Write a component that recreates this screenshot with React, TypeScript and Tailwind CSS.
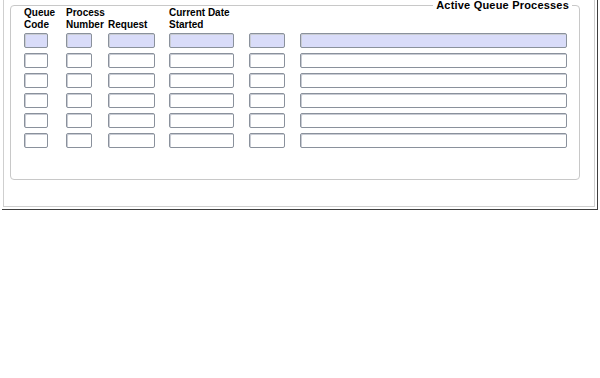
import React from "react";

const widths = [24, 26, 47, 65, 36, 267];
const wClasses = ["w-[24px]", "w-[26px]", "w-[47px]", "w-[65px]", "w-[36px]", "w-[267px]"];

function Field({ idx, active }: { idx: number; active: boolean }) {
  return (
    <div
      className={`${wClasses[idx]} h-[15px] rounded-[2px] border border-[#8a919c] ${
        active ? "bg-[#d9dcf9]" : "bg-white"
      } shadow-[inset_1px_1px_0_#c9ccd4]`}
    />
  );
}

export default function App() {
  const rows = [0, 1, 2, 3, 4, 5];
  return (
    <div
      className="w-[600px] h-[378px] bg-white text-black"
      style={{ fontFamily: '"Liberation Sans", Arial, sans-serif' }}
    >
      <div className="ml-[2px] w-[596px] h-[210px] border-r border-b border-[#3f3f3f] pr-[2px] pb-[2px]">
        <div className="ml-[1px] h-full border-l border-r border-b border-[#cfcfcf] pt-[5px]">
          <div className="relative ml-[6px] w-[570px] h-[175px] rounded-[4px] border border-[#c8c8c8] pl-[13px]">
            <div className="absolute right-[7px] top-[-7px] bg-white px-[3px] text-[11px] leading-[13px] font-bold tracking-[0.2px]">
              Active Queue Processes
            </div>
            <div className="grid grid-cols-[42px_42px_61px_80px_51px_267px] text-[10px] leading-[12px] font-bold pt-[1px]">
              <div className="h-[24px]">
                Queue
                <br />
                Code
              </div>
              <div className="h-[24px]">
                Process
                <br />
                Number
              </div>
              <div className="h-[24px] flex items-end">Request</div>
              <div className="h-[24px]">
                Current Date
                <br />
                Started
              </div>
              <div />
              <div />
            </div>
            <div className="flex flex-col gap-[5px] mt-[2px]">
              {rows.map((r) => (
                <div key={r} className="grid grid-cols-[42px_42px_61px_80px_51px_267px]">
                  {widths.map((_, i) => (
                    <Field key={i} idx={i} active={r === 0} />
                  ))}
                </div>
              ))}
            </div>
          </div>
        </div>
      </div>
    </div>
  );
}
